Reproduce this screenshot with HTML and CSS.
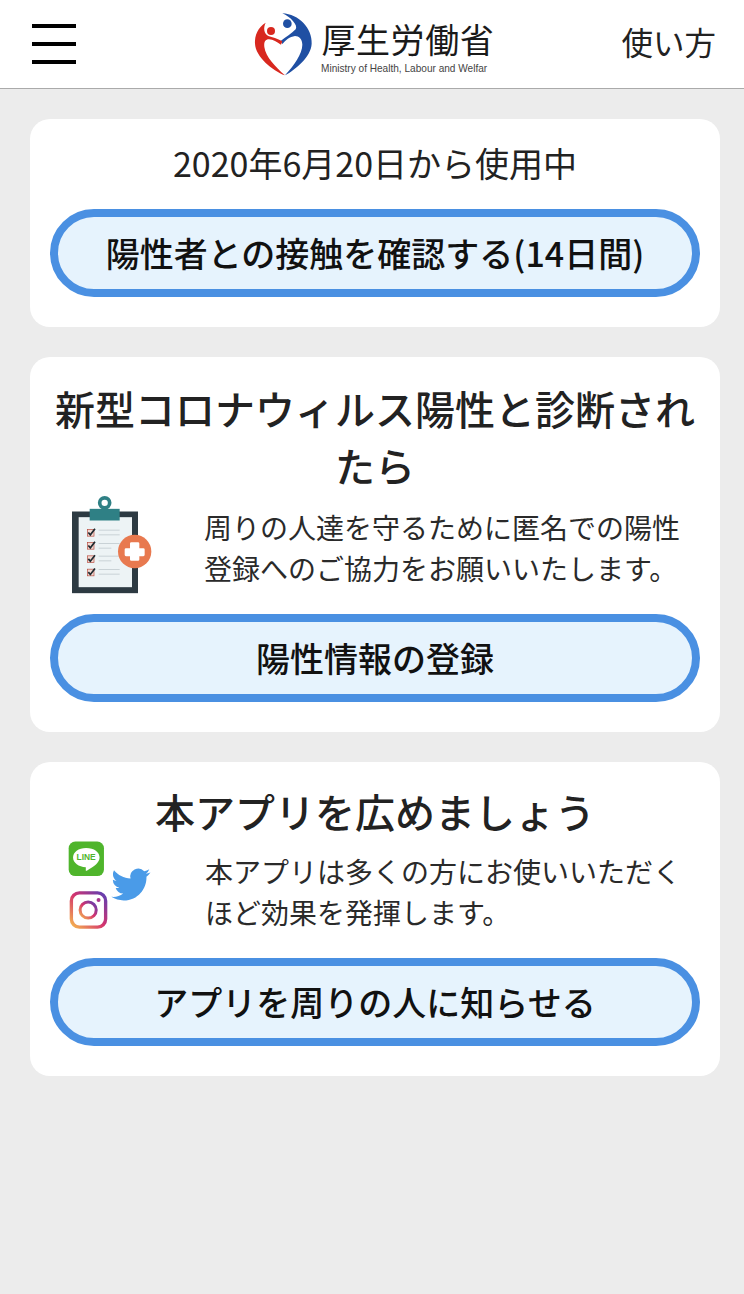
FILE: index.html
```html
<!DOCTYPE html>
<html lang="ja">
<head>
    <meta charset="UTF-8">
    <meta name="viewport" content="width=device-width, initial-scale=1.0">
    <title>接触確認アプリ</title>
    <link rel="stylesheet" href="styles.css">
</head>
<body>
    <header class="top-bar">
        <div class="menu-icon">
            <span></span>
            <span></span>
            <span></span>
        </div>
        <div class="logo">
            <svg class="logo-mark" viewBox="12 10 180 192">
                <circle cx="66" cy="67" r="12" fill="#d8281f"/>
                <circle cx="115" cy="45" r="13" fill="#1f4fa3"/>
                <path fill="#1f4fa3" d="M100 14C150 16 190 60 188 105C186 145 140 182 108 200C135 170 160 135 160 108C160 92 150 82 138 82C122 84 110 95 100 106L95 97C110 85 128 75 140 62C148 50 125 25 100 14Z"/>
                <path fill="#d8281f" d="M50 42C28 55 16 80 18 105C20 145 70 185 108 200C80 175 50 145 46 115C44 98 50 92 60 92C72 92 84 100 96 108L100 98C85 90 70 85 58 82C45 75 42 58 50 42Z"/>
            </svg>
            <div class="logo-text">
                <div class="logo-name">厚生労働省</div>
                <div class="logo-sub">Ministry of Health, Labour and Welfar</div>
            </div>
        </div>
        <a class="help-link">使い方</a>
    </header>

    <main class="content">
        <section class="card card-status">
            <p class="status-text">2020年6月20日から使用中</p>
            <a class="pill-btn">陽性者との接触を確認する(14日間)</a>
        </section>

        <section class="card card-report">
            <h2 class="card-title">新型コロナウィルス陽性と診断されたら</h2>
            <div class="info-row">
                <svg class="info-icon clipboard" viewBox="40 20 270 320">
                    <rect x="52" y="78" width="198" height="245" fill="#2d3a42"/>
                    <rect x="72" y="95" width="160" height="210" fill="#edf3f5"/>
                    <circle cx="150" cy="52" r="15" fill="none" stroke="#2f8085" stroke-width="11"/>
                    <path d="M105 70H195V105H105Z" fill="#2f8085"/>
                    <g fill="none" stroke="#c9d2d6" stroke-width="3">
                        <path d="M132 134H195M132 148H195"/>
                        <path d="M132 174H195M132 188H170"/>
                        <path d="M132 212H195M132 226H170"/>
                        <path d="M132 252H195M132 266H195"/>
                    </g>
                    <g fill="#f3d9d2" stroke="#b5483c" stroke-width="2">
                        <rect x="98" y="132" width="20" height="20"/>
                        <rect x="98" y="171" width="20" height="20"/>
                        <rect x="98" y="211" width="20" height="20"/>
                        <rect x="98" y="251" width="20" height="20"/>
                    </g>
                    <g fill="none" stroke="#1f2a30" stroke-width="5">
                        <path d="M101 141L107 148L121 130"/>
                        <path d="M101 180L107 187L121 169"/>
                        <path d="M101 220L107 227L121 209"/>
                        <path d="M101 260L107 267L121 249"/>
                    </g>
                    <circle cx="240" cy="198" r="50" fill="#e8794f"/>
                    <path d="M230 170H250Q254 170 254 174V188H266Q270 188 270 192V208Q270 212 266 212H254V222Q254 226 250 226H230Q226 226 226 222V212H214Q210 212 210 208V192Q210 188 214 188H226V174Q226 170 230 170Z" fill="#fff"/>
                </svg>
                <p class="info-text">周りの人達を守るために匿名での陽性登録へのご協力をお願いいたします。</p>
            </div>
            <a class="pill-btn">陽性情報の登録</a>
        </section>

        <section class="card card-share">
            <h2 class="card-title">本アプリを広めましょう</h2>
            <div class="info-row">
                <svg class="info-icon social" viewBox="40 30 250 270">
                    <defs>
                        <linearGradient id="instaGrad" x1="0" y1="1" x2="1" y2="0">
                            <stop offset="0" stop-color="#f5b74e"/>
                            <stop offset="0.5" stop-color="#d4336e"/>
                            <stop offset="1" stop-color="#5a3fb5"/>
                        </linearGradient>
                    </defs>
                    <rect x="42" y="37" width="105" height="103" rx="20" fill="#4fb52c"/>
                    <path d="M94 56C118 56 134 68 134 85C134 100 118 112 96 124C94 125 92 124 93 120L93 114C72 113 55 101 55 85C55 68 71 56 94 56Z" fill="#fff"/>
                    <text class="line-label" x="94" y="92" text-anchor="middle">LINE</text>
                    <path transform="translate(169 107) scale(4.85)" fill="#4a9be8" d="M23.953 4.57a10 10 0 01-2.825.775 4.958 4.958 0 002.163-2.723c-.951.555-2.005.959-3.127 1.184a4.92 4.92 0 00-8.384 4.482C7.69 8.095 4.067 6.13 1.64 3.162a4.822 4.822 0 00-.666 2.475c0 1.71.87 3.213 2.188 4.096a4.904 4.904 0 01-2.228-.616v.06a4.923 4.923 0 003.946 4.827 4.996 4.996 0 01-2.212.085 4.936 4.936 0 004.604 3.417 9.867 9.867 0 01-6.102 2.105c-.39 0-.779-.023-1.17-.067a13.995 13.995 0 007.557 2.209c9.053 0 13.998-7.496 13.998-13.985 0-.21 0-.42-.015-.63A9.935 9.935 0 0024 4.59z"/>
                    <rect x="50" y="190" width="102" height="102" rx="24" fill="#fff" stroke="url(#instaGrad)" stroke-width="10"/>
                    <circle cx="100" cy="241" r="24" fill="none" stroke="url(#instaGrad)" stroke-width="9"/>
                    <circle cx="131" cy="211" r="6" fill="#a8348e"/>
                </svg>
                <p class="info-text">本アプリは多くの方にお使いいただくほど効果を発揮します。</p>
            </div>
            <a class="pill-btn">アプリを周りの人に知らせる</a>
        </section>
    </main>
</body>
</html>
```

FILE: styles.css
```css
* {
    box-sizing: border-box;
    margin: 0;
    padding: 0;
}

body {
    background: #ececec;
    min-height: 100vh;
    font-family: "Noto Sans CJK JP", "Noto Sans", sans-serif;
    color: #222;
}

.top-bar {
    display: grid;
    grid-template-columns: 1fr auto 1fr;
    align-items: center;
    height: 89px;
    padding: 0 28px 0 32px;
    background: #fff;
    border-bottom: 1px solid #aaa;
}

.menu-icon {
    display: flex;
    flex-direction: column;
    gap: 14px;
    width: 44px;
}

.menu-icon span {
    display: block;
    height: 4px;
    background: #000;
}

.logo {
    display: flex;
    align-items: center;
    gap: 8px;
}

.logo-mark {
    width: 60px;
    height: 64px;
}

.logo-name {
    margin-top: 4px;
    font-size: 34px;
    line-height: 40px;
    letter-spacing: 0.6px;
    color: #1a1a1a;
}

.logo-sub {
    margin-top: 3px;
    font-family: "Liberation Sans", sans-serif;
    font-size: 10.5px;
    line-height: 12px;
    color: #444;
    white-space: nowrap;
    transform: scaleX(0.96);
    transform-origin: left;
}

.help-link {
    justify-self: end;
    margin-top: -6px;
    font-size: 31.5px;
    line-height: 40px;
    color: #222;
}

.content {
    display: flex;
    flex-direction: column;
    gap: 30px;
    padding: 30px 24px 30px 30px;
}

.card {
    padding: 0 20px 30px;
    background: #fff;
    border-radius: 20px;
}

.card-status {
    padding-top: 21px;
}

.card-report {
    padding-top: 23px;
}

.card-share {
    padding-top: 21px;
}

.status-text {
    margin-bottom: 23px;
    font-size: 34px;
    line-height: 46px;
    text-align: center;
    color: #222;
}

.card-title {
    font-size: 40px;
    font-weight: 500;
    line-height: 57px;
    text-align: center;
    color: #222;
}

.info-row {
    display: flex;
    align-items: flex-start;
}

.info-icon {
    flex: none;
}

.clipboard {
    width: 90px;
    height: 107px;
    margin: -2px 46px 0 18px;
}

.social {
    width: 84px;
    height: 91px;
    margin: -1px 53px 0 18px;
}

.line-label {
    font-family: "Liberation Sans", sans-serif;
    font-size: 25px;
    font-weight: 700;
    fill: #4fb52c;
}

.info-text {
    padding-top: 12px;
    font-size: 28px;
    line-height: 40.5px;
    color: #2a2a2a;
}

.card-report .info-text {
    padding-top: 13px;
    margin-bottom: 26px;
}

.card-share .info-text {
    margin-top: -1px;
    margin-bottom: 26px;
}

.pill-btn {
    display: block;
    height: 88px;
    border: 8px solid #4a90e2;
    border-radius: 44px;
    background: #e6f3fd;
    font-size: 34px;
    font-weight: 500;
    line-height: 72px;
    text-align: center;
    color: #111;
}
```
